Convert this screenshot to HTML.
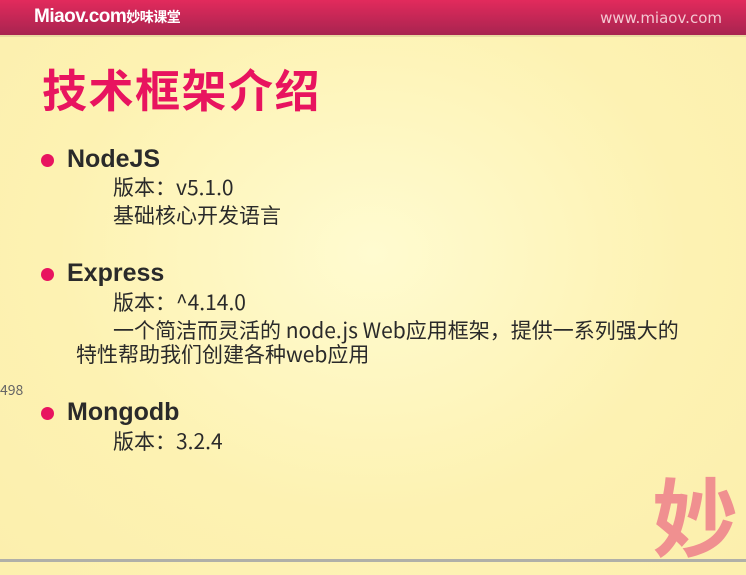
<!DOCTYPE html>
<html><head><meta charset="utf-8"><style>
body{margin:0;width:746px;height:562px;overflow:hidden;background:radial-gradient(ellipse at 50% 45%,#fffbd0 0%,#fdf2b2 60%,#fcefad 100%);font-family:"Liberation Sans","Noto Sans CJK SC",sans-serif;position:relative;color:#2a2a2a}
.hd{position:absolute;left:0;top:0;width:746px;height:35px;background:linear-gradient(#e22a5c,#a82450);border-bottom:2px solid #e8d9a0}
.logo{position:absolute;left:34px;top:6px;color:#fff;font-weight:bold;font-size:19px;letter-spacing:-0.5px}
.logo span{font-size:14px;font-family:"Noto Sans CJK SC",sans-serif}
.url{position:absolute;right:24px;top:9px;color:#f4c8d2;font-size:15px;font-family:"DejaVu Sans",sans-serif}
.t{position:absolute;left:42px;top:55px;font-size:45px;font-weight:bold;color:#e8145f;font-family:"Noto Sans CJK SC",sans-serif;letter-spacing:1.5px}
.dot{position:absolute;left:41px;width:13px;height:13px;border-radius:50%;background:#e8145f}
.h{position:absolute;left:67px;font-size:25px;font-weight:bold;color:#2a2a2a}
.s{position:absolute;font-size:21px;font-family:"Noto Sans CJK SC","Liberation Sans",sans-serif;color:#2a2a2a;white-space:nowrap;line-height:1.2}
.miao{position:absolute;left:652px;top:470px;font-size:86px;font-weight:bold;color:#f09090;font-family:"Noto Sans CJK SC",sans-serif;line-height:1}
.bt{position:absolute;left:0;top:559px;width:746px;height:3px;background:#b0b0a8}
</style></head><body>
<div class="hd"><div class="logo">Miaov.com<span>妙味课堂</span></div><div class="url">www.miaov.com</div></div>
<div class="t">技术框架介绍</div>
<div class="dot" style="top:154px"></div><div class="h" style="top:145px">NodeJS</div>
<div class="s" style="left:113px;top:175px">版本：v5.1.0</div>
<div class="s" style="left:113px;top:203px">基础核心开发语言</div>
<div class="dot" style="top:268px"></div><div class="h" style="top:259px">Express</div>
<div class="s" style="left:113px;top:290px">版本：^4.14.0</div>
<div class="s" style="left:113px;top:318px">一个简洁而灵活的 node.js Web应用框架，提供一系列强大的</div>
<div class="s" style="left:76px;top:342px">特性帮助我们创建各种web应用</div>
<div class="s" style="left:0;top:382px;font-size:14px;color:#666">498</div>
<div class="dot" style="top:407px"></div><div class="h" style="top:398px">Mongodb</div>
<div class="s" style="left:113px;top:429px">版本：3.2.4</div>
<div class="miao">妙</div>
<div class="bt"></div>
</body></html>
